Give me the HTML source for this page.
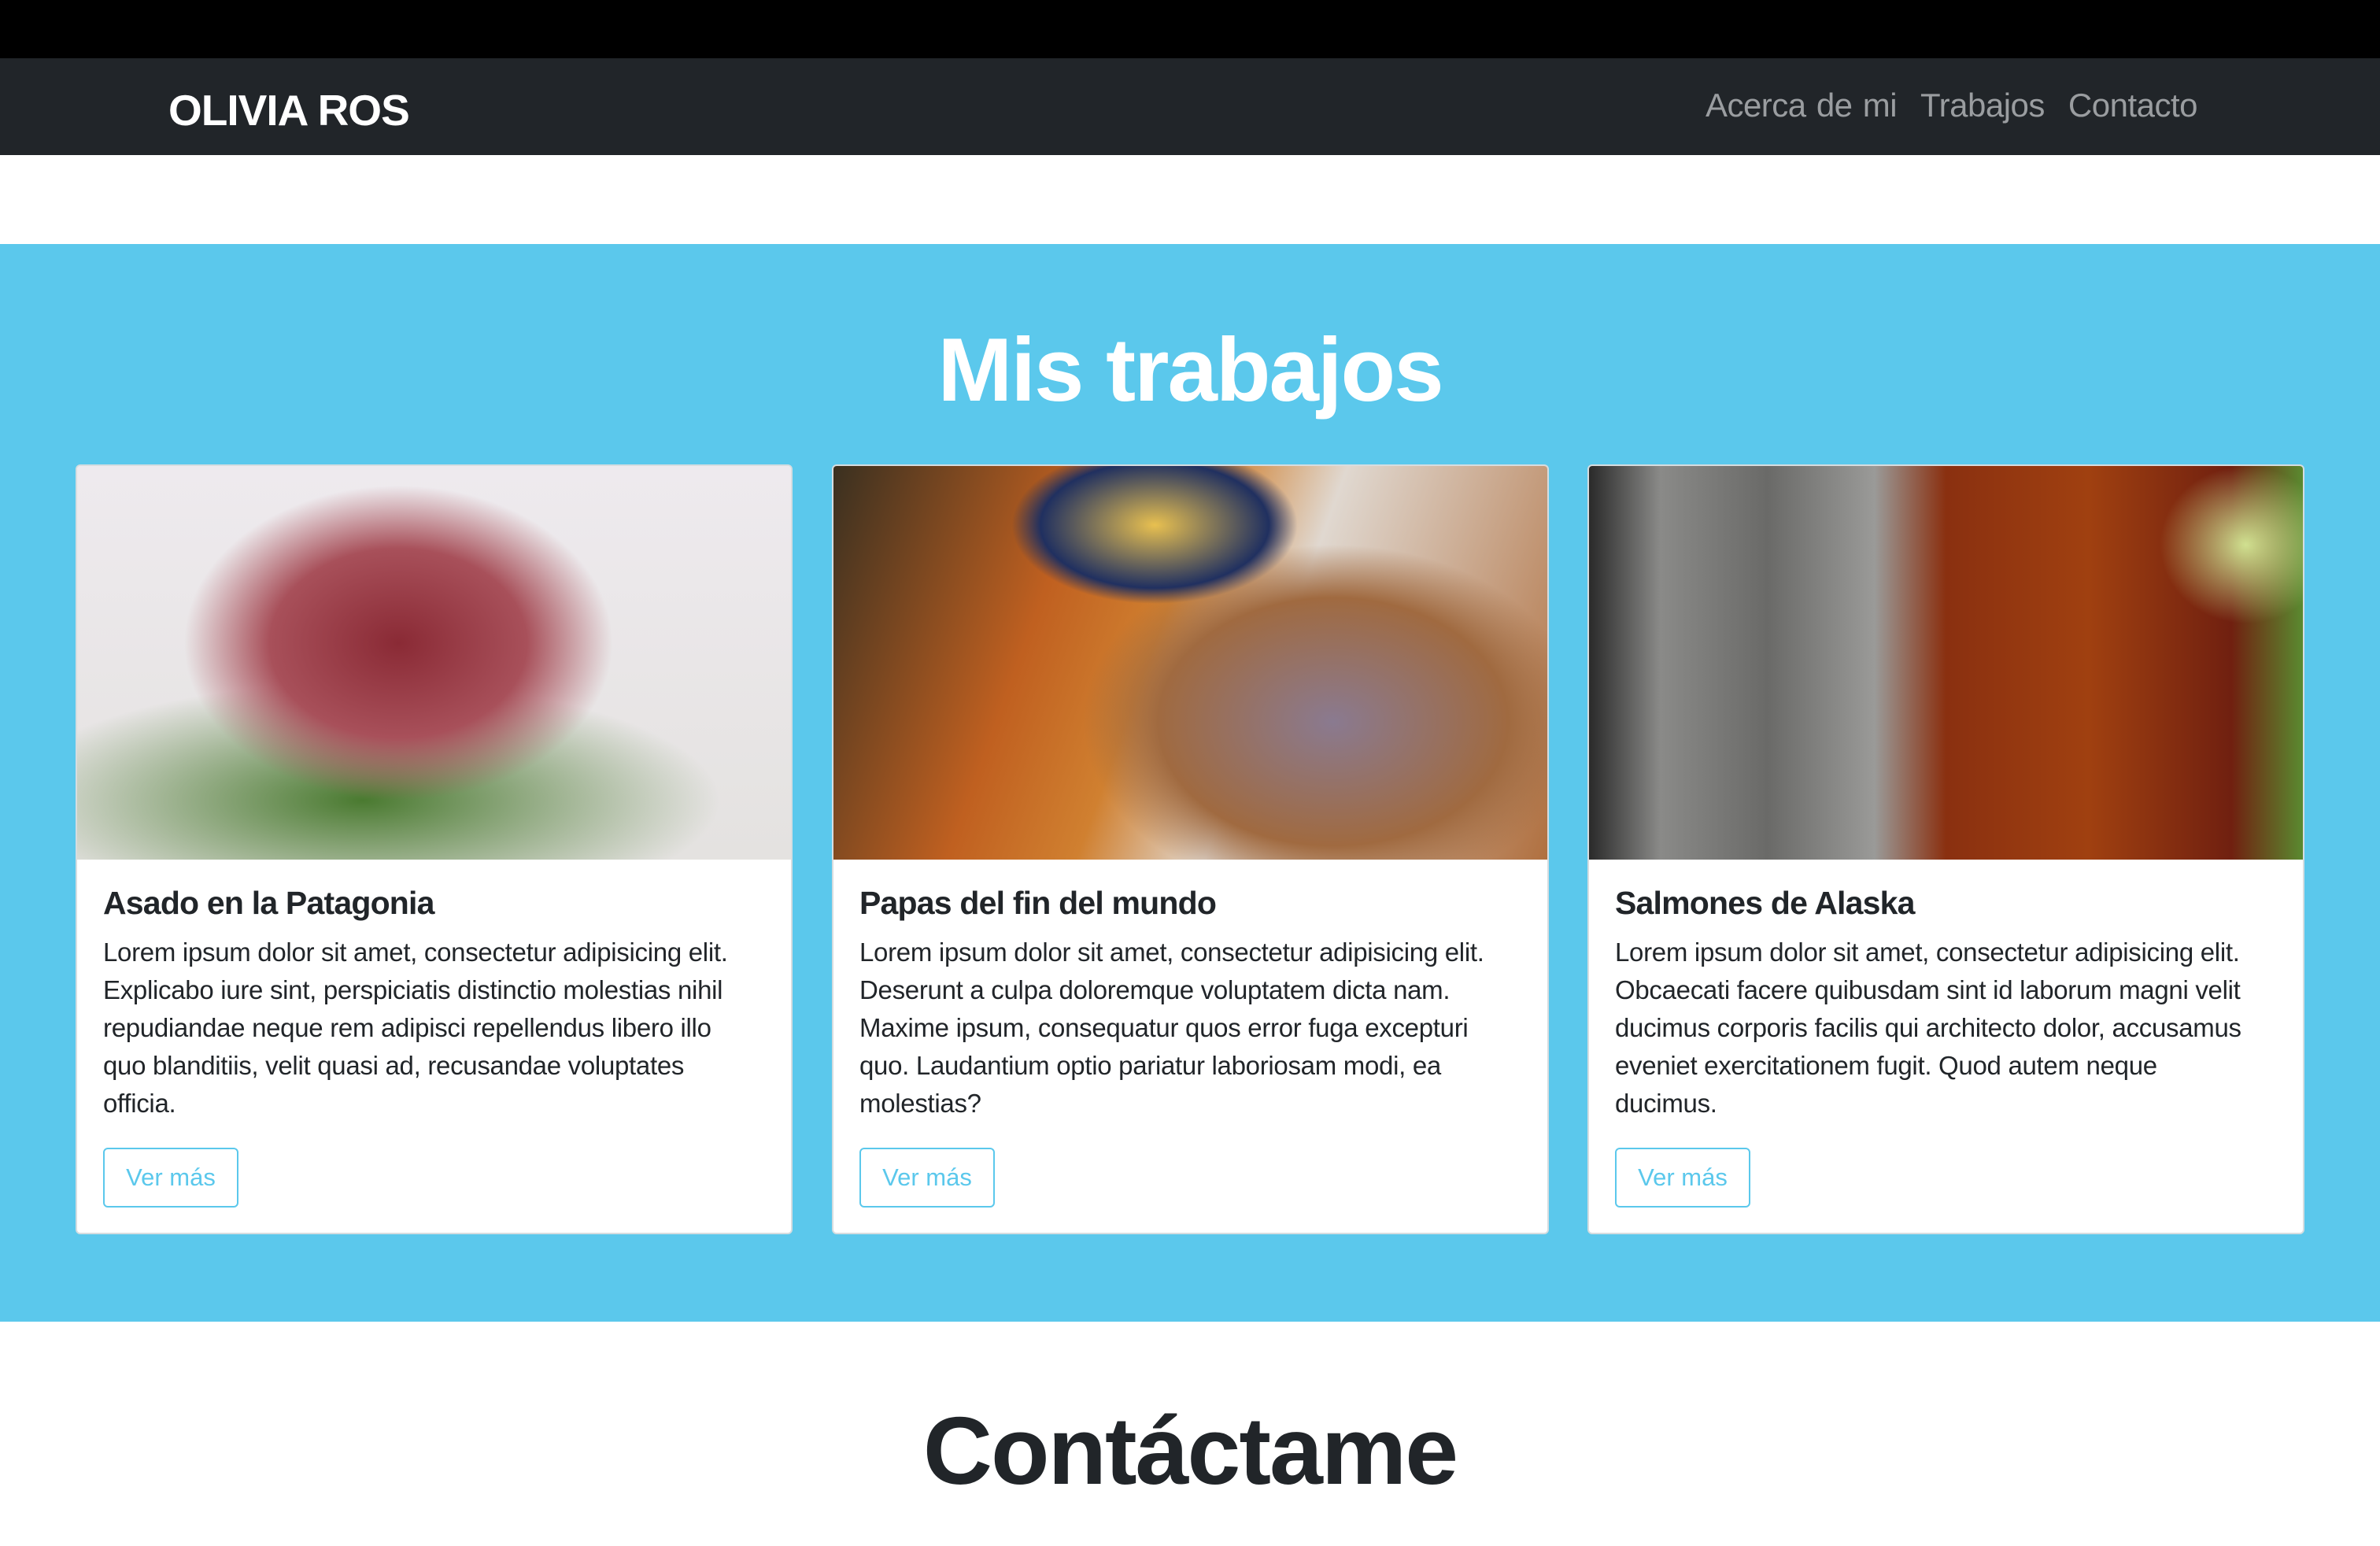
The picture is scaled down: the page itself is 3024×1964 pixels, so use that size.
<!DOCTYPE html>
<html><head><meta charset="utf-8"><style>
*{margin:0;padding:0;box-sizing:border-box}
body{width:3024px;height:1964px;overflow:hidden;background:#fff;font-family:"Liberation Sans",sans-serif;position:relative}
.top{position:absolute;left:0;top:0;width:3024px;height:74px;background:#000}
.nav{position:absolute;left:0;top:74px;width:3024px;height:123px;background:#212529}
.logo{position:absolute;left:214px;top:34px;color:#fff;font-weight:bold;font-size:55px;letter-spacing:-1px}
.links{position:absolute;right:232px;top:36px;color:#9a9da0;font-size:42px;letter-spacing:-0.5px;word-spacing:2px}
.links span{margin-left:30px}
.blue{position:absolute;left:0;top:310px;width:3024px;height:1369px;background:#5bc8ec}
h1{position:absolute;left:0;width:3024px;text-align:center;font-size:114px;font-weight:bold;letter-spacing:-2px}
.card{position:absolute;top:590px;width:911px;height:978px;background:#fff;border:2px solid #d6dde0;border-radius:6px;overflow:hidden}
.img{height:500px}
.t{position:absolute;left:33px;top:532px;font-size:41px;font-weight:bold;color:#212529;letter-spacing:-0.8px}
.p{position:absolute;left:33px;top:594px;font-size:33px;line-height:48px;color:#212529;white-space:nowrap;letter-spacing:-0.3px}
.b{position:absolute;left:33px;top:866px;width:172px;height:76px;border:2px solid #5bc8ec;border-radius:6px;color:#5bc8ec;font-size:31px;text-align:center;line-height:72px}
</style></head><body>
<div class="top"></div>
<div class="nav"><div class="logo">OLIVIA ROS</div><div class="links"><span>Acerca de mi</span><span>Trabajos</span><span>Contacto</span></div></div>
<div class="blue">
<h1 style="top:95px;color:#fff">Mis trabajos</h1>
</div>
<div class="card" style="left:96px">
<div class="img" style="background:radial-gradient(ellipse 30% 40% at 45% 45%,#8a2a35,#a8505a 60%,transparent 100%),radial-gradient(ellipse 50% 30% at 40% 85%,#4a7a30,transparent),linear-gradient(#eeeaee,#e4e2e0)"></div>
<div class="t">Asado en la Patagonia</div>
<div class="p">Lorem ipsum dolor sit amet, consectetur adipisicing elit.<br>Explicabo iure sint, perspiciatis distinctio molestias nihil<br>repudiandae neque rem adipisci repellendus libero illo<br>quo blanditiis, velit quasi ad, recusandae voluptates<br>officia.</div>
<div class="b">Ver más</div>
</div>
<div class="card" style="left:1057px">
<div class="img" style="background:radial-gradient(ellipse 20% 20% at 45% 15%,#e8c050,#203060 80%,transparent 100%),radial-gradient(ellipse 35% 45% at 70% 65%,#8a7a90,#a06a40 70%,transparent 100%),linear-gradient(110deg,#3a3020,#c06020 30%,#d08030 45%,#e0d8d0 60%,#b07040)"></div>
<div class="t">Papas del fin del mundo</div>
<div class="p">Lorem ipsum dolor sit amet, consectetur adipisicing elit.<br>Deserunt a culpa doloremque voluptatem dicta nam.<br>Maxime ipsum, consequatur quos error fuga excepturi<br>quo. Laudantium optio pariatur laboriosam modi, ea<br>molestias?</div>
<div class="b">Ver más</div>
</div>
<div class="card" style="left:2017px">
<div class="img" style="background:radial-gradient(ellipse 12% 20% at 92% 20%,#d0e090,transparent),linear-gradient(90deg,#2a2a2a,#8a8a88 10%,#6a6a68 25%,#9a9a98 40%,#8a3010 50%,#a04010 70%,#702010 90%,#5a8a30)"></div>
<div class="t">Salmones de Alaska</div>
<div class="p">Lorem ipsum dolor sit amet, consectetur adipisicing elit.<br>Obcaecati facere quibusdam sint id laborum magni velit<br>ducimus corporis facilis qui architecto dolor, accusamus<br>eveniet exercitationem fugit. Quod autem neque<br>ducimus.</div>
<div class="b">Ver más</div>
</div>
<h1 style="top:1773px;color:#212529;font-size:122px">Contáctame</h1>
</body></html>
